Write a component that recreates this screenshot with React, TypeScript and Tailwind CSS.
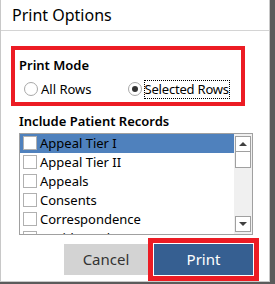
import { useState } from 'react';

const records = ['Appeal Tier I', 'Appeal Tier II', 'Appeals', 'Consents', 'Correspondence', 'Covid Result'];

const font = { fontFamily: '"Noto Sans", "Open Sans", sans-serif' };

function Radio({ checked, label, focused }: { checked: boolean; label: string; focused?: boolean }) {
  return (
    <label className="flex items-center gap-[3px] text-[13px] text-black">
      <span className="w-[14px] h-[14px] rounded-full border border-[#a8a8a8] bg-white flex items-center justify-center">
        {checked && <span className="w-[6px] h-[6px] rounded-full bg-[#333]" />}
      </span>
      <span className={focused ? 'outline-1 outline-dotted outline-black leading-[17px] tracking-[-0.2px]' : 'leading-[17px]'}>{label}</span>
    </label>
  );
}

export default function App() {
  const [mode] = useState('selected');
  return (
    <div className="w-[275px] h-[284px] bg-[#5b5b5b] overflow-hidden" style={font}>
      <div className="w-[270px] h-[282px] bg-white border-l border-r border-b border-[#c8c8c8] flex flex-col">
        <div className="h-[32px] px-[11px] flex items-center border-b border-[#d4d4d4] text-[16px] text-black">
          Print Options
        </div>

        <div className="ml-[10px] mt-[15px] w-[234px] h-[62px] border-4 border-[#ec1c24] px-[4px] pt-[6px]">
          <div className="text-[13px] font-semibold leading-[18px]">Print Mode</div>
          <div className="flex items-center mt-[7px] pl-[5px] gap-[36px]">
            <Radio checked={mode === 'all'} label="All Rows" />
            <Radio checked={mode === 'selected'} label="Selected Rows" focused />
          </div>
        </div>

        <div className="ml-[18px] mt-[6px] text-[13px] font-semibold leading-[18px]">Include Patient Records</div>

        <div className="ml-[18px] mt-[3px] w-[234px] h-[106px] border border-[#a0a0a0] flex overflow-hidden">
          <div className="flex-1 flex flex-col">
            {records.map((r, i) => (
              <div
                key={r}
                className={`h-[19px] shrink-0 flex items-center gap-[3px] pl-[3px] text-[13px] ${
                  i === 0 ? 'bg-[#4f81bd]' : ''
                }`}
              >
                <span className="w-[14px] h-[14px] border border-[#b0b0b0] bg-white shrink-0" />
                <span className="leading-[16px]">{r}</span>
              </div>
            ))}
          </div>
          <div className="w-[18px] bg-[#f0f0f0] flex flex-col items-center justify-between py-[2px]">
            <div className="flex flex-col">
              <div className="w-[16px] h-[16px] border border-[#a0a0a0] bg-white flex items-center justify-center">
                <span className="w-0 h-0 border-l-[4px] border-r-[4px] border-b-[4px] border-l-transparent border-r-transparent border-b-[#404040]" />
              </div>
              <div className="w-[16px] h-[16px] border border-[#a0a0a0] border-t-0 bg-white" />
            </div>
            <div className="w-[16px] h-[16px] border border-[#a0a0a0] bg-white flex items-center justify-center">
              <span className="w-0 h-0 border-l-[4px] border-r-[4px] border-t-[4px] border-l-transparent border-r-transparent border-t-[#404040]" />
            </div>
          </div>
        </div>

        <div className="flex items-start ml-[63px] mt-[3px]">
          <button className="mt-[6px] w-[84px] h-[31px] bg-[#d3d3d3] text-[15px] text-[#333]">Cancel</button>
          <div className="border-[5px] border-[#ec1c24] p-[1px] bg-white">
            <button className="w-[99px] h-[31px] bg-[#365f91] text-[15px] text-white">Print</button>
          </div>
        </div>
      </div>
    </div>
  );
}
